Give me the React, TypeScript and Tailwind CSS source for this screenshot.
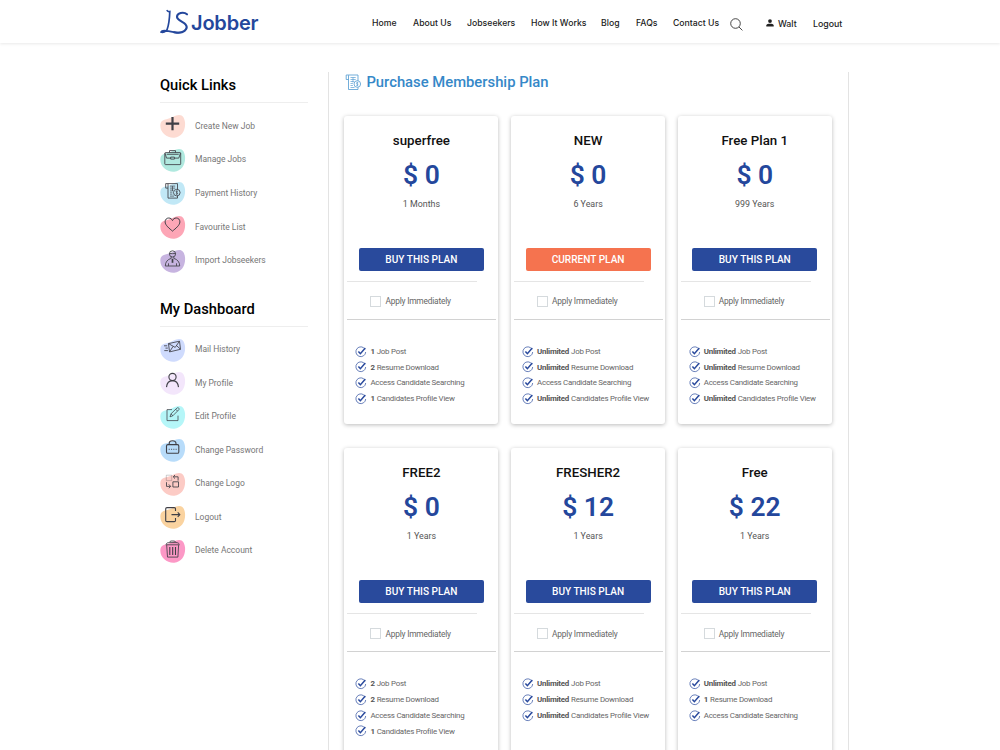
import * as React from "react";

type Feature = { count?: string; text: string };

type Plan = {
  name: string;
  price: number;
  duration: string;
  current?: boolean;
  features: Feature[];
};

type LinkItem = { label: string; blob: string; icon: React.ReactNode };

const features = (post: string, resume: string, view: string): Feature[] => [
  { count: post, text: "Job Post" },
  { count: resume, text: "Resume Download" },
  { text: "Access Candidate Searching" },
  { count: view, text: "Candidates Profile View" },
];

const PLANS: Plan[] = [
  { name: "superfree", price: 0, duration: "1 Months", features: features("1", "2", "1") },
  {
    name: "NEW",
    price: 0,
    duration: "6 Years",
    current: true,
    features: features("Unlimited", "Unlimited", "Unlimited"),
  },
  {
    name: "Free Plan 1",
    price: 0,
    duration: "999 Years",
    features: features("Unlimited", "Unlimited", "Unlimited"),
  },
  { name: "FREE2", price: 0, duration: "1 Years", features: features("2", "2", "1") },
  {
    name: "FRESHER2",
    price: 12,
    duration: "1 Years",
    features: [
      { count: "Unlimited", text: "Job Post" },
      { count: "Unlimited", text: "Resume Download" },
      { count: "Unlimited", text: "Candidates Profile View" },
    ],
  },
  {
    name: "Free",
    price: 22,
    duration: "1 Years",
    features: [
      { count: "Unlimited", text: "Job Post" },
      { count: "1", text: "Resume Download" },
      { text: "Access Candidate Searching" },
    ],
  },
];

// Receipt scroll with a coin, used in the sidebar and the page title
const ReceiptPaths = () => (
  <>
    <path d="M3.5 5.5H1.2V1H13v6M3.5 1.2v14.3H13v-2.3" />
    <path d="M5.5 3.5h5.2M5.5 5.5h5.2M5.5 7.5h3.3M5.5 9.5h2.4M5.5 11.5h2.4M5.5 13.5h4M8 3.5v5" strokeWidth=".7" />
    <circle cx="12.3" cy="10" r="3.3" />
    <path d="M13.3 8.7c-2-.9-2.3 1-1 1.3s1 2.1-1 1.3M12.3 7.8v4.4" strokeWidth=".7" />
  </>
);

const QUICK_LINKS: LinkItem[] = [
  {
    label: "Create New Job",
    blob: "#fddbd2",
    icon: <path d="M8 1.3v13.4M1.3 8h13.4" strokeWidth="2.2" />,
  },
  {
    label: "Manage Jobs",
    blob: "#b0e9df",
    icon: (
      <>
        <rect x=".3" y="3" width="15.9" height="12" rx=".7" />
        <path d="M5 3V1h6v2M.5 3.5 2 8.5h4.5M9.8 8.5h4.5L16 3.5M2.2 4.7h12" />
        <rect x="6.2" y="7.5" width="3.7" height="2" />
      </>
    ),
  },
  { label: "Payment History", blob: "#c1e8f6", icon: <ReceiptPaths /> },
  {
    label: "Favourite List",
    blob: "#fda6b6",
    icon: (
      <path
        d="M8 14.5C5 12 .6 8.6.6 5.3.6 2.9 2.2 1.4 4.2 1.4 6 1.4 7.3 2.4 8 4c.7-1.6 2-2.6 3.8-2.6 2 0 3.6 1.5 3.6 3.9 0 3.3-4.4 6.7-7.4 9.2z"
        strokeWidth="1"
      />
    ),
  },
  {
    label: "Import Jobseekers",
    blob: "#c7b4e0",
    icon: (
      <>
        <circle cx="8" cy="3.3" r="3.1" />
        <path d="M5 2.9c2 .3 4.2.1 6 0M6.7 6.2v1.6C3 8.8.8 11.5.8 15.4h14.4C15.2 11.5 13 8.8 9.3 7.8V6.2M4 15.3v-2.6M12 15.3v-2.6" strokeWidth=".85" />
        <path d="M8 8.2v4" strokeWidth="1.7" />
      </>
    ),
  },
];

const DASHBOARD_LINKS: LinkItem[] = [
  {
    label: "Mail History",
    blob: "#cfdbfd",
    icon: (
      <>
        <path d="m4 4 11-2.4 1 8.1-11 2.6zM4 4l6.7 3.8L15 1.6M5 12.2l3.6-5.4M16 9.7l-4-3.8" />
        <path d="M-.5 6.2h3.2M1 8.5h2.3M-.2 11h3.6" />
      </>
    ),
  },
  {
    label: "My Profile",
    blob: "#f3e6fb",
    icon: (
      <>
        <circle cx="8" cy="4.4" r="3.6" strokeWidth="1.1" />
        <path d="M2 14.5C2.4 10.2 4.7 8 8 8s5.6 2.2 6 6.5" strokeWidth="1.1" />
      </>
    ),
  },
  {
    label: "Edit Profile",
    blob: "#b5f6f8",
    icon: (
      <path
        d="M7.5 3H2.5v11h11V9M5.5 10.2l1-3 6-5.8c.5-.5 1.3-.3 1.8.2s.4 1.2-.1 1.7L8.3 9.2zM11.3 2.7l1.7 1.8M6.5 7.2l1.8 2"
        strokeWidth=".75"
      />
    ),
  },
  {
    label: "Change Password",
    blob: "#b8dcfa",
    icon: (
      <>
        <rect x="2" y="5" width="12.3" height="8.7" rx="1.4" strokeWidth="1.1" />
        <path d="M4.7 5V3.8C4.7.2 11.5.2 11.5 3.8V5" strokeWidth="1.1" />
        <path d="M4.2 9.7h8" strokeDasharray="1.1 1.2" />
      </>
    ),
  },
  {
    label: "Change Logo",
    blob: "#fccbc5",
    icon: (
      <>
        <rect x="1.8" y="1.6" width="5.4" height="5.4" opacity=".3" />
        <rect x="8.4" y="8.2" width="5.6" height="5.2" />
        <path d="M9 3.2h4.6V7M10.5 1.4 8.7 3.2 10.5 5M2 8.6v4.2h4M4.3 10.8l1.9 2-1.9 1.8" />
      </>
    ),
  },
  {
    label: "Logout",
    blob: "#fad3a0",
    icon: (
      <path
        d="M11 4.5V2.2c0-.7-.5-1.2-1.2-1.2H2.5C1.7 1 1.2 1.5 1.2 2.2v11.6c0 .7.5 1.2 1.3 1.2h7.3c.7 0 1.2-.5 1.2-1.2v-2.3M7 8h8.3M13.2 5.8 15.4 8l-2.2 2.2"
        strokeWidth="1.1"
      />
    ),
  },
  {
    label: "Delete Account",
    blob: "#fc98c6",
    icon: (
      <>
        <path d="M2.2 4.5 3 16.5h10.4l.7-12M1.2 4.2h13.9M1.8 3.8C1.7 2.3 3.2 2 5 2l1-1.6h4.2L11.4 2c1.8 0 3.2.4 3.1 1.8M5.3 2h6" />
        <path d="M5.3 6.5v8M8.2 6.5v8M11 6.5v8" strokeWidth="1.1" />
      </>
    ),
  },
];

const NAV = [
  { label: "Home", width: "w-[25px]" },
  { label: "About Us", width: "w-[38px]" },
  { label: "Jobseekers", width: "w-[48px]" },
  { label: "How It Works", width: "w-[54px]" },
  { label: "Blog", width: "w-[19px]" },
  { label: "FAQs", width: "w-[21px]" },
  { label: "Contact Us", width: "w-[47px]" },
];

const Header = () => (
  <header className="h-[43px] w-full shadow-[0_1px_3px_rgba(0,0,0,0.09)]">
    <div className="ml-[160px] flex h-full w-[700px] items-center pt-[4px]">
      <a className="flex h-full w-[212px] shrink-0 items-center">
        <svg
          viewBox="0 0 30 27"
          className="mb-[4px] h-[27px] w-[30px]"
          fill="none"
          stroke="#24479c"
          strokeLinecap="round"
        >
          <path
            d="M7.2 2.6C8 3.8 9 3.7 9.8 3.5 9.6 9 9 16.5 7.1 21.5 6.2 24 2.5 24.8 1 24c.8-1.9 4.6-1.5 7.5-.8 5 1.3 9.8 2.2 13.8.8"
            strokeWidth="1.7"
          />
          <path
            d="M14 24.2c4.2.9 8.2.6 10.5-1.3 2.3-1.9 2.7-4.3 1.2-6.2C23.7 13.9 16.8 12.2 17 8.7c.1-3.6 6.4-5.5 10-2.4"
            strokeWidth="2.1"
          />
        </svg>
        <span className="mb-[2px] ml-[1px] font-['Inter',sans-serif] text-[20px] font-semibold leading-none tracking-[-0.2px] text-[#24479c]">
          Jobber
        </span>
      </a>
      <nav className="flex items-center gap-4 font-['Inter',sans-serif] text-[8.7px] font-medium text-[#222]">
        {NAV.map((item) => (
          <a key={item.label} className={`${item.width} whitespace-nowrap`}>
            {item.label}
          </a>
        ))}
      </nav>
      <svg viewBox="0 0 13 13" className="ml-[10px] mt-[1px] size-[13px]" fill="none" stroke="#333" strokeWidth=".9">
        <circle cx="5.5" cy="5.5" r="4.8" />
        <path d="m9 9 3.4 3.4" />
      </svg>
      <div className="ml-[23px] flex items-center font-['Inter',sans-serif] text-[8.8px] font-medium text-[#222]">
        <svg viewBox="0 0 8 8" className="mb-px mr-[4px] size-[8px]" fill="#222">
          <circle cx="4" cy="2.1" r="1.9" />
          <path d="M.3 7.5V6.4C.5 5.2 2.4 4.8 4 4.8s3.5.4 3.7 1.6v1.1z" />
        </svg>
        <span className="w-[35px]">Walt</span>
        <span>Logout</span>
      </div>
    </div>
  </header>
);

type LinkGroupProps = { title: string; links: LinkItem[]; rows: string };

const LinkGroup = ({ title, links, rows }: LinkGroupProps) => (
  <section>
    <h2 className="h-[26px] border-b border-[#eee] text-[14.7px] font-medium leading-[17px] text-black">
      {title}
    </h2>
    <ul className={`grid ${rows}`}>
      {links.map((link) => (
        <li key={link.label} className="flex items-center text-[8.5px] tracking-[-0.02px] text-[#777]">
          <svg viewBox="0 0 26 26" className="mr-[9px] size-[26px]">
            <path
              d="M.4 11.5C.8 7.5 3.8 6.8 8 5.7 12.5 4.5 14.8 2.3 19 2c3.8-.1 5.5 3 6 7.3.8 8-3.3 14.7-10.7 15.4C7 25.3-.5 19 .4 11.5z"
              fill={link.blob}
            />
            <g
              transform="translate(4.5 2.6)"
              fill="none"
              stroke="#3f3f46"
              strokeWidth=".85"
              strokeLinejoin="round"
            >
              {link.icon}
            </g>
          </svg>
          {link.label}
        </li>
      ))}
    </ul>
  </section>
);

const CheckIcon = () => (
  <svg viewBox="0 0 12 12" className="mr-[3px] size-[12px]" fill="none" stroke="#2a4a9d">
    <path d="M10 3.2A4.9 4.9 0 1 0 10.7 6" strokeWidth=".7" />
    <path d="M3.4 5.4 5.4 7.7 10.3 1.9" strokeWidth="1.5" />
  </svg>
);

const PlanCard = ({ plan }: { plan: Plan }) => (
  <article className="flex h-[308px] flex-col rounded-[3px] bg-white shadow-[0_1px_4px_rgba(0,0,0,0.27)]">
    <h3 className="mt-[16px] text-center text-[13.3px] font-medium leading-[17px] text-[#111]">
      {plan.name}
    </h3>
    <p className="mt-[10px] text-center text-[26.4px] font-semibold leading-[32px] text-[#24479c]">
      $ {plan.price}
    </p>
    <p className="mt-[7px] text-center text-[8.9px] leading-[12px] text-[#555]">{plan.duration}</p>
    <button
      className={`mx-[14.5px] mt-[38px] h-[23px] shrink-0 rounded-[2px] text-[10.1px] font-medium leading-[23px] text-white ${
        plan.current ? "bg-[#f5734f]" : "bg-[#294a9c]"
      }`}
    >
      {plan.current ? "CURRENT PLAN" : "BUY THIS PLAN"}
    </button>
    <div className="mx-[3px] mt-[10px] h-px w-[130px] shrink-0 bg-[#e5e5e5]" />
    <label className="flex h-[38px] shrink-0 items-center pl-[26px] pt-px text-[8.4px] tracking-[-0.2px] text-[#666]">
      <span className="mr-[4px] size-[11px] border border-[#d5dadd]" />
      Apply Immediately
    </label>
    <div className="mx-[3px] -mt-px h-px w-[149px] shrink-0 bg-[#d2d2d2]" />
    <ul className="mt-[23.8px] pl-[11px] text-[7.9px] tracking-[-0.24px] text-[#666]">
      {plan.features.map((feature) => (
        <li key={feature.text} className="flex h-[15.8px] items-center whitespace-nowrap">
          <CheckIcon />
          {feature.count && <b className="mr-[2px] font-bold text-[#555]">{feature.count}</b>}
          {feature.text}
        </li>
      ))}
    </ul>
  </article>
);

export default function App() {
  return (
    <div className="flex h-[750px] w-[1000px] flex-col overflow-hidden bg-white font-['Roboto',sans-serif]">
      <Header />
      <div className="ml-[160px] flex min-h-0 flex-1 pt-[29px]">
        <aside className="flex w-[148px] shrink-0 flex-col gap-[23px] pt-[5.3px]">
          <LinkGroup title="Quick Links" links={QUICK_LINKS} rows="auto-rows-[33.7px] pt-[5.8px]" />
          <LinkGroup title="My Dashboard" links={DASHBOARD_LINKS} rows="auto-rows-[33.5px] pt-[6.4px]" />
        </aside>
        <main className="ml-[19.5px] w-[521px] shrink-0 border-x border-x-[#e3e3e3] pl-[15.9px]">
          <h1 className="flex h-[21px] items-center pl-px text-[14.8px] font-medium text-[#3588c8]">
            <svg
              viewBox="0 0 16 17"
              className="mr-[5px] h-[17px] w-[16px] shrink-0"
              fill="none"
              stroke="#5a9fd3"
              strokeWidth=".85"
            >
              <ReceiptPaths />
            </svg>
            Purchase Membership Plan
          </h1>
          <div className="mt-[23px] grid grid-cols-[154px_154px_154px] gap-x-[12.7px] gap-y-[24.4px]">
            {PLANS.map((plan) => (
              <PlanCard key={plan.name} plan={plan} />
            ))}
          </div>
        </main>
      </div>
    </div>
  );
}
